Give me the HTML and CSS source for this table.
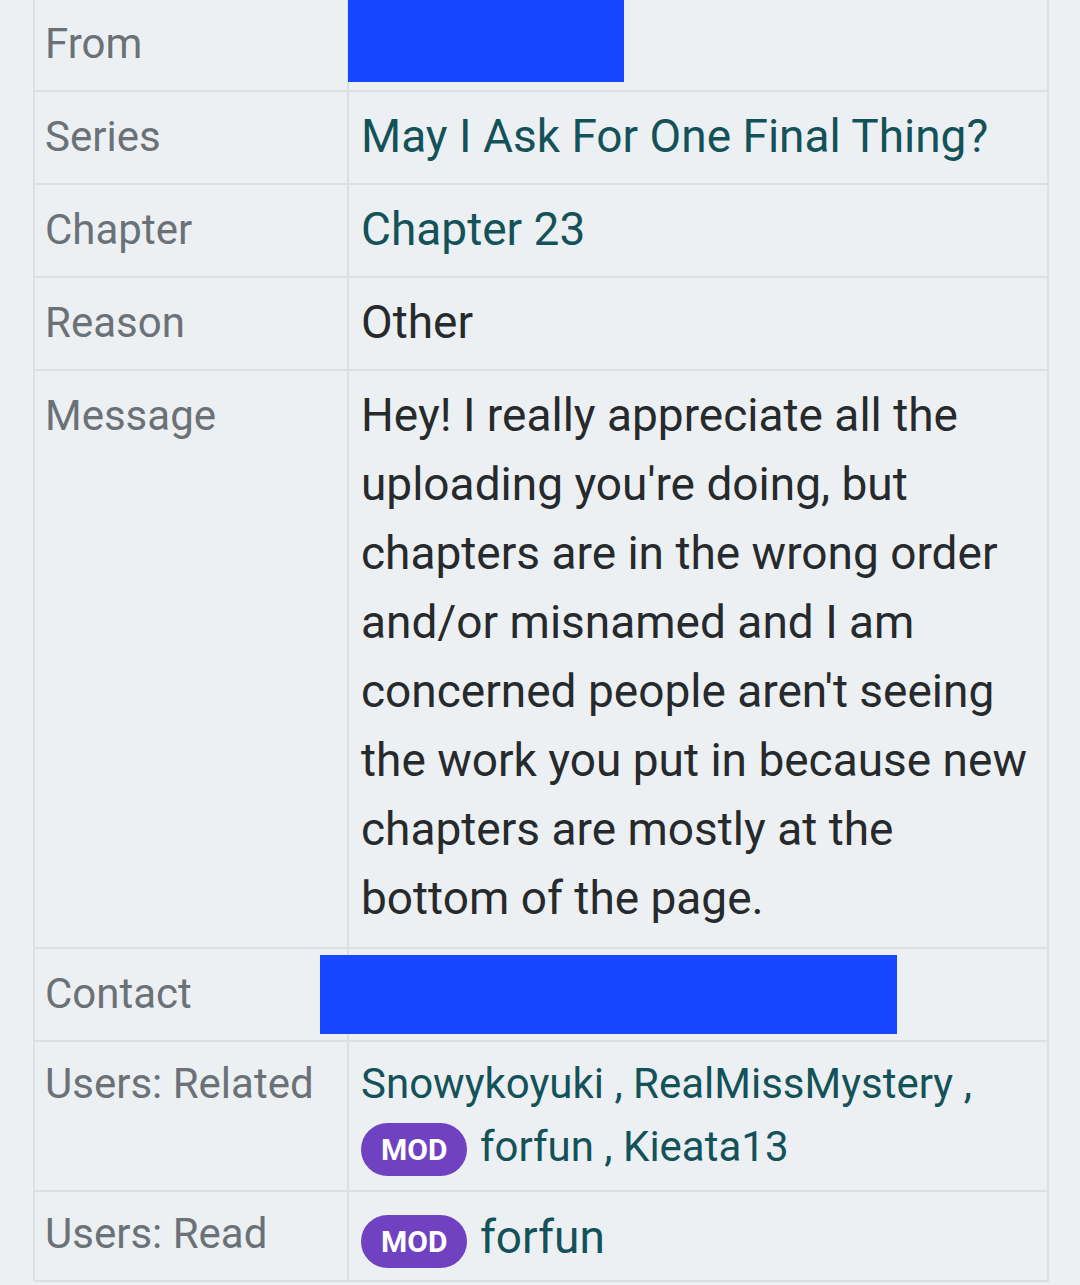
FILE: index.html
```html
<!DOCTYPE html>
<html lang="en">
  <head>
    <meta charset="UTF-8" />
    <meta name="viewport" content="width=device-width, initial-scale=1.0" />
    <title>Report</title>
    <link rel="stylesheet" href="styles.css">
  </head>
  <body>
    <table class="report">
      <tr>
        <td class="label">From</td>
        <td class="value"><span class="redact redact-from"></span></td>
      </tr>
      <tr>
        <td class="label">Series</td>
        <td class="value"><a href="#">May I Ask For One Final Thing?</a></td>
      </tr>
      <tr>
        <td class="label">Chapter</td>
        <td class="value"><a href="#">Chapter 23</a></td>
      </tr>
      <tr>
        <td class="label">Reason</td>
        <td class="value">Other</td>
      </tr>
      <tr>
        <td class="label">Message</td>
        <td class="value message">Hey! I really appreciate all the uploading you're doing, but chapters are in the wrong order and/or misnamed and I am concerned people aren't seeing the work you put in because new chapters are mostly at the bottom of the page.</td>
      </tr>
      <tr>
        <td class="label">Contact</td>
        <td class="value contact"><span class="redact redact-contact"></span></td>
      </tr>
      <tr class="users">
        <td class="label">Users: Related</td>
        <td class="value">
          <a href="#">Snowykoyuki</a> <span class="sep">,</span> <a href="#">RealMissMystery</a> <span class="sep">,</span>
          <span class="badge">MOD</span> <a href="#">forfun</a> <span class="sep">,</span> <a href="#">Kieata13</a>
        </td>
      </tr>
      <tr class="users last">
        <td class="label">Users: Read</td>
        <td class="value"><span class="badge">MOD</span> <a href="#">forfun</a></td>
      </tr>
    </table>
  </body>
</html>
```

FILE: styles.css
```css
* {
  margin: 0;
  padding: 0;
  box-sizing: border-box;
  font-family: Roboto, "Noto Sans", sans-serif;
}
:root {
  --bg: #edf0f3;
  --line: #dcdfe3;
  --label: #6b7277;
  --text: #262a2c;
  --link: #14525a;
  --mod: #7042c2;
}
body {
  background: var(--bg);
  overflow: hidden;
}
.report {
  margin: -3px 0 0 33px;
  width: 1016px;
  border-collapse: collapse;
  border: 2px solid var(--line);
}
.report td {
  border: 2px solid var(--line);
  vertical-align: top;
  padding: 10px 12px 12px;
  line-height: 69px;
}
.label {
  width: 314px;
  font-size: 42px;
  color: var(--label);
  padding-left: 10px !important;
}
.value {
  position: relative;
  font-size: 46px;
  color: var(--text);
}
.value a {
  color: var(--link);
  text-decoration: none;
}
.message {
  padding-bottom: 14px !important;
}
.redact {
  position: absolute;
  background: #1746ff;
}
.redact-from {
  left: -1px;
  top: 0;
  width: 276px;
  height: 83px;
}
.redact-contact {
  left: -29px;
  top: 6px;
  width: 577px;
  height: 79px;
}
.users td {
  line-height: 63px;
}
.users .value {
  font-size: 42px;
}
.users.last td {
  height: 89px;
}
.users.last .value {
  padding-top: 14px;
  padding-bottom: 10px;
}
.users.last .value a {
  font-size: 46px;
}
.sep {
  color: var(--link);
}
.badge {
  display: inline-block;
  vertical-align: middle;
  background: var(--mod);
  color: #fff;
  font-size: 30px;
  font-weight: 700;
  line-height: 53px;
  height: 53px;
  padding: 0 20px;
  border-radius: 27px;
  margin: -6px 2px -6px 0;
}
```
